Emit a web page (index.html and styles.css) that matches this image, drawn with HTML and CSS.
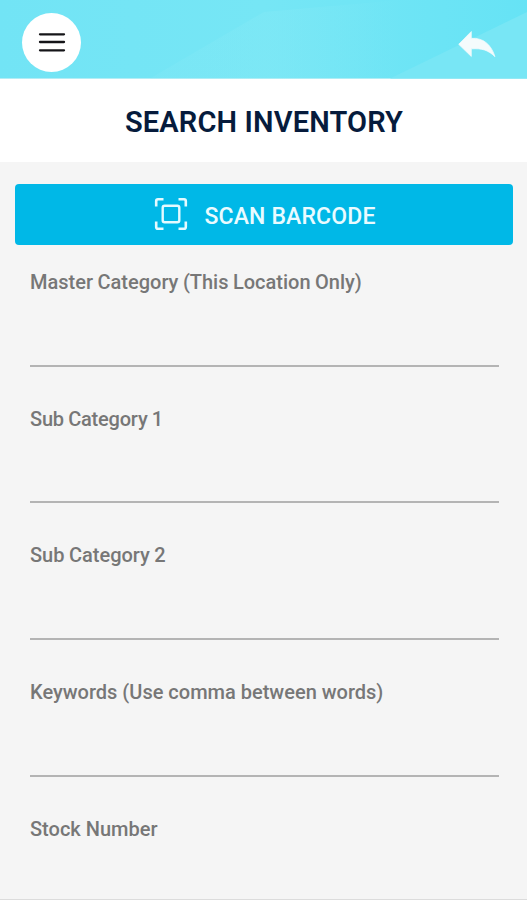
FILE: index.html
```html
<!DOCTYPE html>
<html lang="en">
<head>
<meta charset="utf-8">
<title>Search Inventory</title>
<link rel="stylesheet" href="styles.css">
</head>
<body>
<header class="topbar">
  <svg class="topbar-art" viewBox="0 0 527 79" preserveAspectRatio="none" aria-hidden="true">
    <defs>
      <linearGradient id="sky" x1="0" y1="0" x2="1" y2="0">
        <stop offset="0" stop-color="#72e4f5"/><stop offset=".5" stop-color="#76e6f5"/><stop offset="1" stop-color="#66e3f5"/>
      </linearGradient>
      <linearGradient id="haze" x1="0" y1="0" x2="1" y2="0">
        <stop offset="0" stop-color="#87eaf6" stop-opacity=".25"/><stop offset=".5" stop-color="#87eaf6" stop-opacity=".35"/><stop offset="1" stop-color="#87eaf6" stop-opacity="0"/>
      </linearGradient>
    </defs>
    <rect width="527" height="79" fill="url(#sky)"/>
    <path d="M150 79L264 12L400 0V79Z" fill="url(#haze)"/>
    <path d="M390 79L527 12V79Z" fill="#78e6f5"/>
  </svg>
  <button class="menu" aria-label="Menu">
    <svg width="28" height="22" viewBox="0 0 28 22"><path d="M2 3.3H26M2 11H26M2 19.3H26" fill="none" stroke="#151518" stroke-width="2.3" stroke-linecap="round"/></svg>
  </button>
  <button class="back" aria-label="Back">
    <svg width="38" height="28" viewBox="0 0 38 28"><path d="M.7 14.3L13.3 1.5V8.3C25 7.8 33 14 37 26.7C30 20 24 18.2 13.3 18.8V26.5Z" fill="#f4fbfc" stroke="#f4fbfc" stroke-width=".7" stroke-linejoin="round"/></svg>
  </button>
</header>
<h1 class="title"><span>SEARCH INVENTORY</span></h1>
<main class="form">
  <button class="scan">
    <svg width="34" height="34" viewBox="0 0 34 34" fill="none" stroke="#e4faff">
      <path d="M2.2 9.5V4Q2.2 2.2 4 2.2H9.5M24.5 2.2H30Q31.8 2.2 31.8 4V9.5M31.8 24.5V30Q31.8 31.8 30 31.8H24.5M9.5 31.8H4Q2.2 31.8 2.2 30V24.5" stroke-width="2.6"/>
      <rect x="8.7" y="8.7" width="16.6" height="16.6" rx="2" stroke-width="2.4"/>
    </svg>
    <span>SCAN BARCODE</span>
  </button>
  <label class="field"><span>Master Category (This Location Only)</span><input type="text"></label>
  <label class="field"><span class="tight">Sub Category 1</span><input type="text"></label>
  <label class="field"><span>Sub Category 2</span><input type="text"></label>
  <label class="field"><span class="loose">Keywords (Use comma between words)</span><input type="text"></label>
  <label class="field last"><span class="loose">Stock Number</span><input type="text"></label>
</main>
</body>
</html>
```
FILE: styles.css
```css
* { box-sizing: border-box; }
body {
  margin: 0;
  height: 900px;
  overflow: hidden;
  background: #f5f5f5;
  font-family: Roboto, "Liberation Sans", sans-serif;
}
button { border: 0; padding: 0; font: inherit; }
.topbar {
  position: relative;
  height: 78.5px;
  display: flex;
  align-items: flex-start;
  justify-content: space-between;
  padding: 12.5px 31px 0 22px;
}
.topbar-art { position: absolute; inset: 0; width: 100%; height: 100%; }
.menu, .back { position: relative; display: grid; place-items: center; }
.menu { width: 59px; height: 59px; border-radius: 50%; background: #fff; }
.back { background: none; margin-top: 17.5px; }
.title {
  margin: 0;
  height: 83.5px;
  padding: 4px 0 0 1px;
  display: flex;
  align-items: center;
  justify-content: center;
  background: #fff;
  color: #061b3c;
  font-size: 29px;
  font-weight: 600;
  letter-spacing: .15px;
  line-height: 34px;
}
.form { padding: 22px 14px 0 15px; }
.scan {
  width: 100%;
  height: 60.5px;
  display: flex;
  align-items: center;
  justify-content: center;
  gap: 16px;
  padding-left: 2px;
  border-radius: 4px;
  background: #00b8e7;
  color: #e9fbff;
  font-size: 23px;
  font-weight: 500;
  letter-spacing: .15px;
}
.scan span { padding-top: 4px; }
.field {
  height: 136.7px;
  display: flex;
  flex-direction: column;
  margin: 0 14px 0 15px;
  padding-top: 25.5px;
  color: #777;
  font-size: 20px;
  font-weight: 500;
  word-spacing: -.5px;
  line-height: 25px;
}
.field span { white-space: nowrap; }
.field .tight { letter-spacing: -.2px; }
.field .loose { word-spacing: 0; }
.field input {
  height: 71.5px;
  border: 0;
  border-bottom: 2px solid #b4b4b4;
  padding: 0;
  background: none;
  outline: none;
}
.form .last { margin: 0 -14px 0 -15px; }
.last span { padding-left: 30px; }
.last input { height: 59px; flex: none; border-color: #dcdcdc; }
```
